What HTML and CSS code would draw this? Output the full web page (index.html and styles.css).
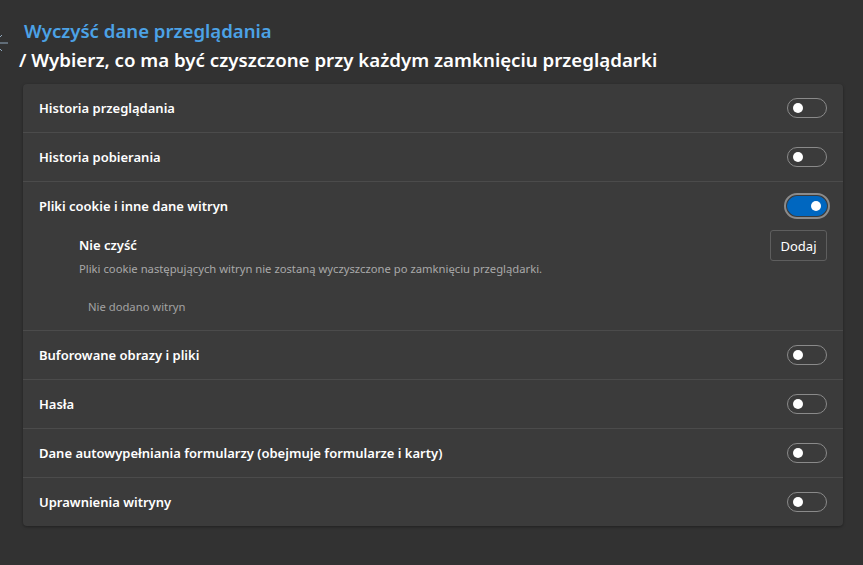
FILE: index.html
```html
<!DOCTYPE html>
<html lang="pl">
<head>
<meta charset="utf-8">
<title>Wyczyść dane przeglądania</title>
<link rel="stylesheet" href="styles.css">
</head>
<body>
<div class="page">
  <header class="header">
    <div class="title-row">
      <svg class="back" width="10" height="26" viewBox="0 0 10 26"><path d="M-6 25 H8 M-6 25 L2 17 M-6 25 L2 33" stroke="#8fa7bd" stroke-width="1" fill="none"/></svg>
      <h1 class="title">Wyczyść dane przeglądania</h1>
    </div>
    <h2 class="subtitle">/ Wybierz, co ma być czyszczone przy każdym zamknięciu przeglądarki</h2>
  </header>
  <section class="card">
    <div class="row"><span class="label">Historia przeglądania</span><span class="toggle"></span></div>
    <div class="row"><span class="label">Historia pobierania</span><span class="toggle"></span></div>
    <div class="group">
      <div class="row plain"><span class="label">Pliki cookie i inne dane witryn</span><span class="toggle on"></span></div>
      <div class="sub">
        <div class="sub-head">
          <div class="sub-text">
            <div class="sub-title">Nie czyść</div>
            <div class="sub-desc">Pliki cookie następujących witryn nie zostaną wyczyszczone po zamknięciu przeglądarki.</div>
          </div>
          <button class="btn">Dodaj</button>
        </div>
        <div class="empty">Nie dodano witryn</div>
      </div>
    </div>
    <div class="row"><span class="label">Buforowane obrazy i pliki</span><span class="toggle"></span></div>
    <div class="row"><span class="label">Hasła</span><span class="toggle"></span></div>
    <div class="row"><span class="label">Dane autowypełniania formularzy (obejmuje formularze i karty)</span><span class="toggle"></span></div>
    <div class="row"><span class="label">Uprawnienia witryny</span><span class="toggle"></span></div>
  </section>
</div>
</body>
</html>
```

FILE: styles.css
```css
* { box-sizing: border-box; }
html, body { margin: 0; padding: 0; }
body {
  background: #323232;
  color: #ffffff;
  font-family: "Noto Sans", "Open Sans", sans-serif;
  width: 863px;
  height: 565px;
  overflow: hidden;
}
.page { padding: 0 20px 0 23px; }
.header { padding-top: 18px; height: 84px; }
.title-row { display: flex; align-items: flex-start; margin-left: -23px; }
.back { flex: none; margin-right: 14px; overflow: visible; }
.title {
  margin: 0;
  font-size: 18.6px;
  font-weight: 600;
  line-height: 26px;
  color: #4ca2e6;
}
.subtitle {
  margin: 3px 0 0 -4px;
  font-size: 18.7px;
  font-weight: 600;
  line-height: 26px;
  color: #ffffff;
}
.card {
  width: 820px;
  background: #3b3b3b;
  border-radius: 4px;
  box-shadow: 0 1px 3px rgba(0,0,0,0.35);
}
.row {
  display: flex;
  align-items: center;
  justify-content: space-between;
  height: 49px;
  padding: 0 16px;
  border-top: 1px solid #4b4b4b;
}
.card > .row:first-child { border-top: none; height: 48px; }
.group { border-top: 1px solid #4b4b4b; }
.row.plain { border-top: none; height: 48px; }
.label { font-size: 13px; font-weight: 600; }
.toggle {
  position: relative;
  width: 40px;
  height: 20px;
  border: 1px solid #8a8a8a;
  border-radius: 10px;
  flex: none;
}
.toggle::after {
  content: "";
  position: absolute;
  top: 4px;
  left: 5px;
  width: 10px;
  height: 10px;
  border-radius: 50%;
  background: #ffffff;
}
.toggle.on {
  background: #0067c0;
  border-color: #0067c0;
  outline: 2px solid #8b8b8b;
  outline-offset: 1px;
}
.toggle.on::after { left: auto; right: 5px; }
.sub { padding: 0 16px 15px 56px; }
.sub-head { display: flex; justify-content: space-between; align-items: flex-start; }
.sub-text { padding-top: 4px; }
.sub-title { font-size: 13px; font-weight: 600; line-height: 22px; }
.sub-desc { font-size: 11.25px; line-height: 16px; margin-top: 5px; color: #a9a9a9; }
.btn {
  width: 57px;
  height: 31px;
  background: #3b3b3b;
  border: 1px solid #5e5e5e;
  border-radius: 3px;
  color: #ffffff;
  font-family: inherit;
  font-size: 13px;
  padding: 0;
}
.empty { margin: 22px 0 0 9px; font-size: 11.25px; line-height: 16px; color: #a3a3a3; }
```
